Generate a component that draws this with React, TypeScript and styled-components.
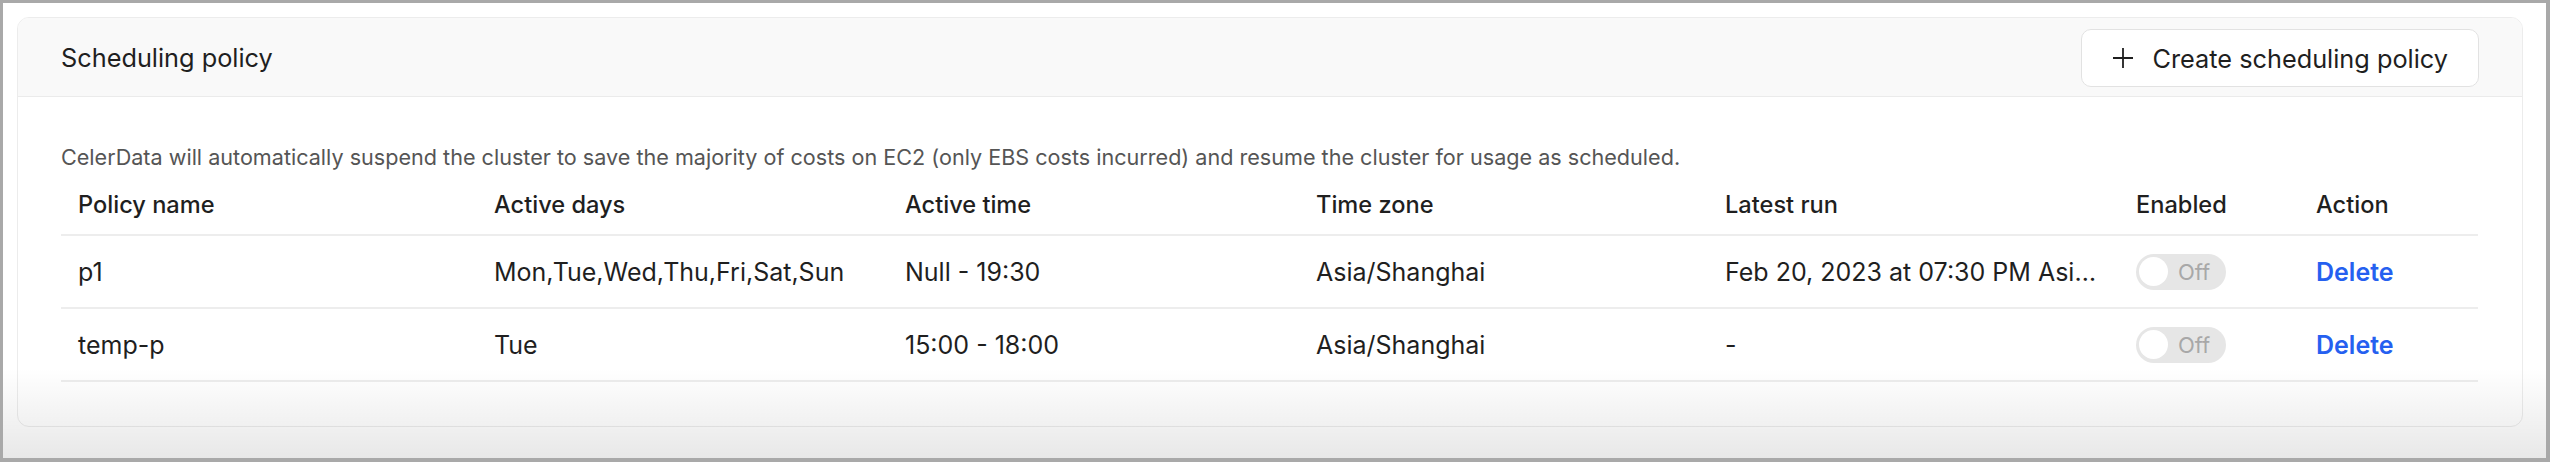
import styled, { createGlobalStyle } from 'styled-components';

interface IPolicy {
  name: string;
  days: string;
  time: string;
  zone: string;
  latestRun: string;
  enabled: boolean;
}

const policies: IPolicy[] = [
  {
    name: 'p1',
    days: 'Mon,Tue,Wed,Thu,Fri,Sat,Sun',
    time: 'Null - 19:30',
    zone: 'Asia/Shanghai',
    latestRun: 'Feb 20, 2023 at 07:30 PM Asia/Shanghai',
    enabled: false,
  },
  {
    name: 'temp-p',
    days: 'Tue',
    time: '15:00 - 18:00',
    zone: 'Asia/Shanghai',
    latestRun: '-',
    enabled: false,
  },
];

const colWidths = [416, 411, 411, 409, 411, 180, 179];

const GlobalStyle = createGlobalStyle`
  html, body {
    margin: 0;
    padding: 0;
    background: #ffffff;
  }
  body {
    font-family: Inter, "Noto Sans", "Liberation Sans", sans-serif;
    color: #1f1f1f;
  }
  * {
    box-sizing: border-box;
  }
`;

const Frame = styled.div`
  position: relative;
  width: 2550px;
  height: 462px;
  border-style: solid;
  border-color: #a9a9a9;
  border-width: 3px 4px 4px 3px;
  background: #ffffff;
  padding: 14px 23px 0 14px;
  overflow: hidden;

  /* soft shade over the lower edge of the window */
  &::after {
    content: '';
    position: absolute;
    left: 0;
    right: 0;
    bottom: 0;
    height: 90px;
    pointer-events: none;
    background: linear-gradient(to bottom, rgba(0, 0, 0, 0), rgba(0, 0, 0, 0.09));
  }
`;

const Card = styled.section`
  border: 1px solid #ececec;
  border-radius: 12px;
  background: #ffffff;
  overflow: hidden;
`;

const CardHeader = styled.header`
  display: flex;
  align-items: center;
  justify-content: space-between;
  height: 79px;
  padding: 0 43px;
  background: #f9f9f9;
  border-bottom: 1px solid #ebebeb;
`;

const Title = styled.h2`
  margin: 0;
  font-size: 25.3px;
  font-weight: 400;
  color: #1f1f1f;
`;

const CreateButton = styled.button`
  display: flex;
  align-items: center;
  gap: 18px;
  height: 58px;
  margin-top: 2px;
  padding: 0 30px;
  border: 1px solid #e2e2e2;
  border-radius: 10px;
  background: #ffffff;
  font-family: inherit;
  font-size: 25.3px;
  font-weight: 400;
  color: #1f1f1f;
  cursor: pointer;
`;

const CardBody = styled.div`
  padding: 43px 43px 44px;
`;

const Description = styled.p`
  margin: 0;
  font-size: 21.6px;
  line-height: 34px;
  color: #555555;
`;

const Table = styled.table`
  width: 2417px;
  border-collapse: collapse;
  table-layout: fixed;
`;

const Th = styled.th`
  height: 61px;
  padding: 0 17px;
  text-align: left;
  font-size: 23.6px;
  font-weight: 500;
  color: #1f1f1f;
  border-bottom: 2px solid #ededed;
`;

const Td = styled.td`
  height: 73px;
  padding: 0 20px 0 17px;
  font-size: 25px;
  color: #1f1f1f;
  white-space: nowrap;
  overflow: hidden;
  text-overflow: ellipsis;
  border-bottom: 2px solid #ededed;
`;

const Switch = styled.span<{ $on: boolean }>`
  display: inline-flex;
  align-items: center;
  width: 90px;
  height: 36px;
  padding: 0 3px;
  border-radius: 18px;
  background: ${(p) => (p.$on ? '#2560f0' : '#e6e6e6')};
  vertical-align: middle;
`;

const Knob = styled.span`
  width: 29px;
  height: 29px;
  border-radius: 50%;
  background: #ffffff;
`;

const SwitchLabel = styled.span`
  margin-left: 10px;
  font-size: 22px;
  color: #a8a8a8;
`;

const DeleteLink = styled.a`
  font-size: 25px;
  font-weight: 600;
  color: #2560f0;
  cursor: pointer;
`;

function PlusIcon() {
  return (
    <svg width="22" height="22" viewBox="0 0 22 22" fill="none">
      <path d="M11 1v20M1 11h20" stroke="#1f1f1f" strokeWidth="1.8" />
    </svg>
  );
}

function App() {
  return (
    <>
      <GlobalStyle />
      <Frame>
        <Card>
          <CardHeader>
            <Title>Scheduling policy</Title>
            <CreateButton>
              <PlusIcon />
              Create scheduling policy
            </CreateButton>
          </CardHeader>
          <CardBody>
            <Description>
              CelerData will automatically suspend the cluster to save the majority of costs on EC2
              (only EBS costs incurred) and resume the cluster for usage as scheduled.
            </Description>
            <Table>
              <colgroup>
                {colWidths.map((w, i) => (
                  <col key={i} style={{ width: w }} />
                ))}
              </colgroup>
              <thead>
                <tr>
                  <Th>Policy name</Th>
                  <Th>Active days</Th>
                  <Th>Active time</Th>
                  <Th>Time zone</Th>
                  <Th>Latest run</Th>
                  <Th>Enabled</Th>
                  <Th>Action</Th>
                </tr>
              </thead>
              <tbody>
                {policies.map((policy) => (
                  <tr key={policy.name}>
                    <Td>{policy.name}</Td>
                    <Td>{policy.days}</Td>
                    <Td>{policy.time}</Td>
                    <Td>{policy.zone}</Td>
                    <Td>{policy.latestRun}</Td>
                    <Td>
                      <Switch $on={policy.enabled}>
                        <Knob />
                        <SwitchLabel>{policy.enabled ? 'On' : 'Off'}</SwitchLabel>
                      </Switch>
                    </Td>
                    <Td>
                      <DeleteLink>Delete</DeleteLink>
                    </Td>
                  </tr>
                ))}
              </tbody>
            </Table>
          </CardBody>
        </Card>
      </Frame>
    </>
  );
}

export default App;
